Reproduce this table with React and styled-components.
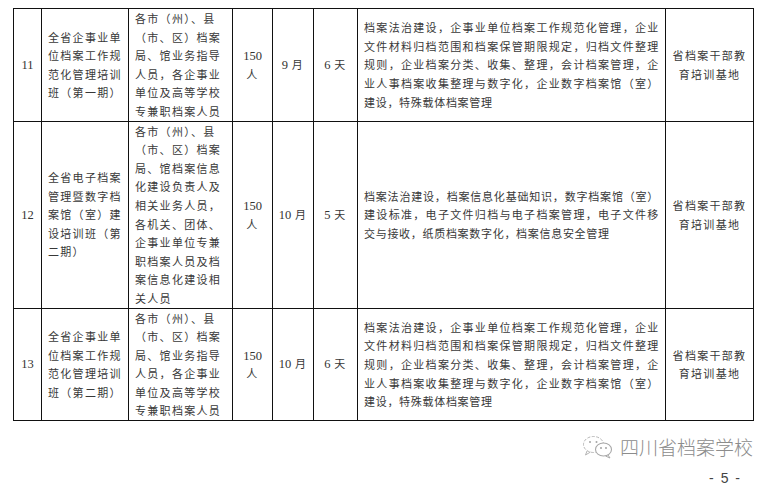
import styled, { createGlobalStyle } from "styled-components"

const GlobalStyle = createGlobalStyle`
  html, body {
    margin: 0;
    padding: 0;
    background: #fff;
  }
  body {
    font-family: "Noto Sans CJK SC", "Noto Sans", sans-serif;
    color: #333;
  }
`

const Page = styled.div`
  width: 777px;
  height: 489px;
  box-sizing: border-box;
  padding: 8px 25px 0 13px;
  overflow: hidden;
`

const Table = styled.table`
  border-collapse: collapse;
  table-layout: fixed;
  width: 740px;
`

const Col = styled.col`
  width: ${(p) => p.$w}px;
`

const Cell = styled.td`
  border: 1px solid #111;
  padding: ${(p) => (p.$align === "left" ? "0 6px 0 6px" : "0 2px")};
  text-align: ${(p) => p.$align || "center"};
  vertical-align: middle;
  font-size: 11px;
  line-height: 18.6px;
  letter-spacing: ${(p) => (p.$tight ? "0.7px" : "1.3px")};
  color: #383838;
  white-space: nowrap;
  overflow: hidden;
`

const Line = styled.div`
  height: 18.6px;
  text-align-last: ${(p) => (p.$justify ? "justify" : "auto")};
`

const Num = styled.span`
  font-family: "Liberation Serif", "Times New Roman", serif;
  font-size: 12.5px;
  letter-spacing: 0;
  color: #333;
`

const Footer = styled.div`
  width: 740px;
  display: flex;
  flex-direction: column;
  align-items: flex-end;
`

const Brand = styled.div`
  display: flex;
  align-items: center;
  gap: 6px;
  margin-top: 14px;
`

const BrandName = styled.span`
  font-size: 19px;
  font-weight: 300;
  letter-spacing: 0;
  color: #8c8c8c;
  line-height: 22px;
`

const PageNo = styled.div`
  font-family: "Liberation Sans", Arial, sans-serif;
  font-size: 14px;
  color: #444;
  margin-top: 11px;
  margin-right: 13px;
  word-spacing: 3px;
`

const TARGET_SHORT = [
  "各市（州）、县",
  "（市、区）档案",
  "局、馆业务指导",
  "人员，各企事业",
  "单位及高等学校",
  "专兼职档案人员",
]

const CONTENT_ENTERPRISE = [
  "档案法治建设，企事业单位档案工作规范化管理，企业",
  "文件材料归档范围和档案保管期限规定，归档文件整理",
  "规则，企业档案分类、收集、整理，会计档案管理，企",
  "业人事档案收集整理与数字化，企业数字档案馆（室）",
  "建设，特殊载体档案管理",
]

const PLACE = ["省档案干部教", "育培训基地"]

const rows = [
  {
    no: "11",
    name: ["全省企事业单", "位档案工作规", "范化管理培训", "班（第一期）"],
    target: TARGET_SHORT,
    month: "9",
    days: "6",
    content: CONTENT_ENTERPRISE,
  },
  {
    no: "12",
    name: ["全省电子档案", "管理暨数字档", "案馆（室）建", "设培训班（第", "二期）"],
    target: [
      "各市（州）、县",
      "（市、区）档案",
      "局、馆档案信息",
      "化建设负责人及",
      "相关业务人员，",
      "各机关、团体、",
      "企事业单位专兼",
      "职档案人员及档",
      "案信息化建设相",
      "关人员",
    ],
    month: "10",
    days: "5",
    content: [
      "档案法治建设，档案信息化基础知识，数字档案馆（室）",
      "建设标准，电子文件归档与电子档案管理，电子文件移",
      "交与接收，纸质档案数字化，档案信息安全管理",
    ],
  },
  {
    no: "13",
    name: ["全省企事业单", "位档案工作规", "范化管理培训", "班（第二期）"],
    target: TARGET_SHORT,
    month: "10",
    days: "6",
    content: CONTENT_ENTERPRISE,
  },
]

// every line but the last of a paragraph is stretched to the column edge
const Lines = ({ items, justify }) =>
  items.map((t, i) => (
    <Line key={i} $justify={justify && i < items.length - 1}>
      {t}
    </Line>
  ))

const WechatIcon = () => (
  <svg width="32" height="24" viewBox="0 0 32 24" fill="none">
    <ellipse cx="11.5" cy="9.5" rx="10" ry="8" stroke="#b5b5b5" strokeWidth="1" strokeDasharray="3 1.5" />
    <path d="M5 16 L3.5 20 L8.5 17" stroke="#b5b5b5" strokeWidth="1" />
    <circle cx="8" cy="7" r="1" fill="#a5a5a5" />
    <circle cx="14.5" cy="7" r="1" fill="#a5a5a5" />
    <ellipse cx="21.5" cy="14.5" rx="8" ry="6.5" fill="#fff" stroke="#a8a8a8" strokeWidth="1.1" />
    <path d="M26 20 L28 23 L23.5 21" stroke="#a8a8a8" strokeWidth="1" />
    <circle cx="19" cy="13" r="0.9" fill="#999" />
    <circle cx="24" cy="13" r="0.9" fill="#999" />
  </svg>
)

const App = () => {
  return (
    <Page>
      <GlobalStyle />
      <Table>
        <colgroup>
          <Col $w={28} />
          <Col $w={87} />
          <Col $w={104} />
          <Col $w={40} />
          <Col $w={41} />
          <Col $w={44} />
          <Col $w={308} />
          <Col $w={88} />
        </colgroup>
        <tbody>
          {rows.map((r) => (
            <tr key={r.no}>
              <Cell>
                <Num>{r.no}</Num>
              </Cell>
              <Cell $align="left">
                <Lines items={r.name} />
              </Cell>
              <Cell $align="left">
                <Lines items={r.target} />
              </Cell>
              <Cell>
                <Line>
                  <Num>150</Num>
                </Line>
                <Line>人</Line>
              </Cell>
              <Cell>
                <Num>{r.month}</Num> 月
              </Cell>
              <Cell>
                <Num>{r.days}</Num> 天
              </Cell>
              <Cell $align="left" $tight>
                <Lines items={r.content} justify />
              </Cell>
              <Cell>
                <Lines items={PLACE} />
              </Cell>
            </tr>
          ))}
        </tbody>
      </Table>
      <Footer>
        <Brand>
          <WechatIcon />
          <BrandName>四川省档案学校</BrandName>
        </Brand>
        <PageNo>- 5 -</PageNo>
      </Footer>
    </Page>
  )
}

export default App
